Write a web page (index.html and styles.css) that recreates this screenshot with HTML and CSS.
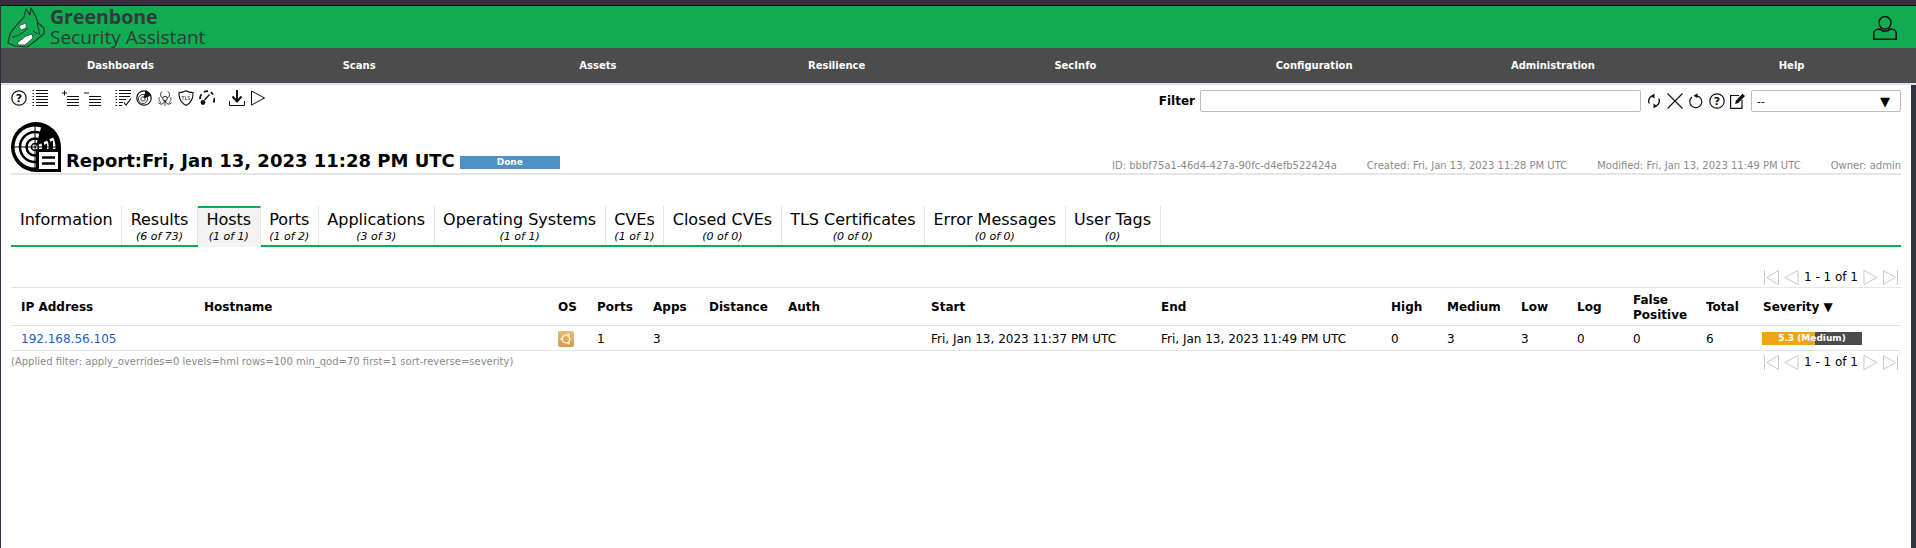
FILE: index.html
```html
<!DOCTYPE html>
<html lang="en">
<head>
    <meta charset="UTF-8">
    <meta name="viewport" content="width=device-width, initial-scale=1.0">
    <title>Greenbone Security Assistant</title>
    <link rel="stylesheet" href="styles.css">
</head>
<body>
    <header class="top">
        <div class="brand">
            <svg class="logo" width="40" height="42" viewBox="0 0 40 42">
                <path d="M1 36 L3 27 C7 20 13 15 17 10 L19 2 L23 8 L24 1 L29 10 L31 16 L37 21 L37 27 L33 30 L27 35 L20 40 L8 39 Z" fill="#12a850" stroke="#1d3b2b" stroke-width="1.2" stroke-linejoin="round"/>
                <path d="M12 19 L19 16 L19 21 L14 23 Z" fill="#fff" stroke="#1d3b2b" stroke-width=".6"/>
                <path d="M10 36 L19 29 L25 27 L26 31 L18 38 L12 38 Z" fill="#fff" stroke="#1d3b2b" stroke-width=".8"/>
                <path d="M5 30 C10 30 16 26 21 21 M30 16 L33 28 M26 24 L31 27" fill="none" stroke="#1d3b2b" stroke-width="1"/>
            </svg>
            <div class="brand-text">
                <div class="brand-name">Greenbone</div>
                <div class="brand-sub">Security Assistant</div>
            </div>
            <svg class="user" width="24" height="24" viewBox="0 0 24 24" fill="none" stroke="#111" stroke-width="1.5">
                <ellipse cx="12" cy="6.8" rx="6" ry="6.3"/>
                <path d="M.8 23.2 V17 C.8 14.5 4 13 7.2 13 C8.5 15.8 15.5 15.8 16.8 13 C20 13 23.2 14.5 23.2 17 V23.2 Z"/>
            </svg>
        </div>
        <nav class="menu">
            <a>Dashboards</a>
            <a>Scans</a>
            <a>Assets</a>
            <a>Resilience</a>
            <a>SecInfo</a>
            <a>Configuration</a>
            <a>Administration</a>
            <a>Help</a>
        </nav>
        <div class="menu-line"></div>
    </header>

    <main class="content">
        <div class="toolbar">
            <div class="tools">
                <div class="tool-group">
                    <svg class="icon" viewBox="0 0 16 16"><circle cx="8" cy="8" r="7.2" fill="none" stroke="#111" stroke-width="1.2"/><text x="8" y="12" class="icon-q">?</text></svg>
                    <svg class="icon" viewBox="0 0 16 16" stroke="#111" stroke-width="1" fill="none"><path d="M4 .5H16M4 3.5H16M4 6.5H16M4 9.5H16M4 12.5H16M4 15.5H16"/><path d="M.5 .5H2M.5 3.5H2M.5 6.5H2M.5 9.5H2M.5 12.5H2M.5 15.5H2"/></svg>
                </div>
                <div class="tool-group">
                    <svg class="icon icon-wide" viewBox="0 0 17 16" stroke="#111" stroke-width="1" fill="none"><path d="M5 6.5H17M5 9.5H17M5 12.5H17M5 15.5H17"/><path d="M0 3H5M2.5 .5V5.5"/></svg>
                    <svg class="icon icon-wide" viewBox="0 0 17 16" stroke="#111" stroke-width="1" fill="none"><path d="M5 6.5H17M5 9.5H17M5 12.5H17M5 15.5H17"/><path d="M0 3H5"/></svg>
                </div>
                <div class="tool-group">
                    <svg class="icon" viewBox="0 0 16 16" stroke="#111" stroke-width="1" fill="none"><path d="M4 .5H16M4 3.5H16M4 6.5H15M4 9.5H11M4 12.5H8M4 15.5H7"/><path d="M.5 .5H2M.5 3.5H2M.5 6.5H2M.5 9.5H2M.5 12.5H2M.5 15.5H2"/><path d="M9 12.5L11 15L16 8.5" stroke-width="1.1"/></svg>
                    <svg class="icon" viewBox="0 0 16 16" fill="none" stroke="#111"><circle cx="8" cy="8" r="7.2" stroke-width="1.2"/><circle cx="7" cy="9" r="4.6" stroke-width=".8"/><circle cx="7" cy="9" r="2.2" stroke-width=".8"/><path d="M8 8L10 .8L15 5Z" fill="#111"/></svg>
                    <svg class="icon" viewBox="0 0 16 16" fill="none" stroke="#111" stroke-width=".9"><circle cx="8" cy="8.5" r="2.2"/><path d="M5 1.5C2.5 4 3.5 7.5 6 8M11 1.5C13.5 4 12.5 7.5 10 8M1.5 12.5C3 15 7 14.5 7.5 11M14.5 12.5C13 15 9 14.5 8.5 11"/><path d="M8 11V16M2 7A6.5 6.5 0 0 0 4 13M14 7A6.5 6.5 0 0 1 12 13" stroke-width=".7"/></svg>
                    <svg class="icon" viewBox="0 0 16 16" fill="none" stroke="#111" stroke-width="1.1"><path d="M8 .8C10 2 12.5 2.6 15 2.6C15.4 9 12.5 13.2 8 15.4C3.5 13.2 .6 9 1 2.6C3.5 2.6 6 2 8 .8Z"/><text x="8" y="9.6" class="icon-tls">TLS</text></svg>
                    <svg class="icon" viewBox="0 0 16 16" fill="none" stroke="#111" stroke-width="1.8"><path d="M1 9A7 7 0 0 1 2.5 4.2M5 2A7 7 0 0 1 9 1.2M12 2.2A7 7 0 0 1 14 4.5M15.2 8A7 7 0 0 1 14.5 12.5"/><path d="M10.5 4.5L5.5 10" stroke-width="1.4"/><circle cx="4" cy="12.5" r="2.4" fill="#111" stroke="none"/></svg>
                </div>
                <div class="tool-group">
                    <svg class="icon" viewBox="0 0 16 16" fill="none" stroke="#111"><path d="M8 0V10" stroke-width="2"/><path d="M3.5 6.5L8 11.5L12.5 6.5" stroke-width="2"/><path d="M.5 11V15.5H15.5V11" stroke-width="1"/></svg>
                    <svg class="icon" viewBox="0 0 16 16" fill="none" stroke="#111" stroke-width="1"><path d="M1.5 1V15L14.5 8Z"/></svg>
                </div>
            </div>
            <div class="filter">
                <label class="filter-label" for="filter">Filter</label>
                <input class="filter-input" id="filter" type="text">
                <div class="filter-icons">
                    <svg class="icon" viewBox="0 0 16 16" fill="none" stroke="#111" stroke-width="1.4"><path d="M3.2 10.5A5.5 5.5 0 0 1 6 3M12.8 5.5A5.5 5.5 0 0 1 10 13"/><path d="M8.5 .5L5 3L8.5 5.5Z M7.5 10.5L11 13L7.5 15.5Z" fill="#111" stroke="none"/></svg>
                    <svg class="icon" viewBox="0 0 16 16" fill="none" stroke="#111" stroke-width="1.2"><path d="M.5 .5L15.5 15.5M15.5 .5L.5 15.5"/></svg>
                    <svg class="icon" viewBox="0 0 16 16" fill="none" stroke="#111" stroke-width="1.2"><path d="M9 2.8A6 6 0 1 1 4 4"/><path d="M9.5 .2V5.2L5.5 2.7Z" fill="#111" stroke="none"/></svg>
                    <svg class="icon" viewBox="0 0 16 16"><circle cx="8" cy="8" r="7.2" fill="none" stroke="#111" stroke-width="1.2"/><text x="8" y="12" class="icon-q">?</text></svg>
                    <svg class="icon" viewBox="0 0 16 16" fill="none" stroke="#111" stroke-width="1.2"><path d="M12 7V15.4H.6V2.5H9"/><path d="M5 11L6 7.5L12.5 .8L15 3L8.4 10Z" fill="#111" stroke="none"/></svg>
                </div>
                <div class="filter-select">
                    <span>--</span>
                    <span class="select-arrow">▼</span>
                </div>
            </div>
        </div>

        <div class="title-row">
            <svg class="report-icon" width="50" height="50" viewBox="0 0 50 50">
                <path d="M25 0A25 25 0 0 1 50 25V50H25A25 25 0 0 1 25 0Z" fill="#000"/>
                <circle cx="24" cy="25" r="20.5" fill="#fff"/>
                <circle cx="24" cy="25" r="15" fill="none" stroke="#000" stroke-width="2.5"/>
                <circle cx="24" cy="25" r="8.5" fill="none" stroke="#000" stroke-width="2.5"/>
                <circle cx="24" cy="25" r="3.5" fill="none" stroke="#000" stroke-width="1.5"/>
                <path d="M24 2V48M2 25H46" stroke="#000" stroke-width="1"/>
                <path d="M45 14L25 24L31 2Z" fill="#000"/>
                <path d="M33 27V23L36 21.5V27ZM39 27V20L42 18.5V27Z" fill="#000"/>
                <rect x="25" y="27" width="25" height="23" fill="#000"/>
                <rect x="28" y="30" width="19" height="17" fill="#fff"/>
                <path d="M31 35.5H44M31 41.5H44" stroke="#000" stroke-width="2.6"/>
            </svg>
            <h1 class="report-title">Report:Fri, Jan 13, 2023 11:28 PM UTC</h1>
            <div class="status-bar">Done</div>
            <div class="report-meta">
                <span>ID: bbbf75a1-46d4-427a-90fc-d4efb522424a</span>
                <span>Created: Fri, Jan 13, 2023 11:28 PM UTC</span>
                <span>Modified: Fri, Jan 13, 2023 11:49 PM UTC</span>
                <span>Owner: admin</span>
            </div>
        </div>

        <div class="tabs">
            <div class="tab">Information</div>
            <div class="tab">Results<small>(6 of 73)</small></div>
            <div class="tab active">Hosts<small>(1 of 1)</small></div>
            <div class="tab">Ports<small>(1 of 2)</small></div>
            <div class="tab">Applications<small>(3 of 3)</small></div>
            <div class="tab">Operating Systems<small>(1 of 1)</small></div>
            <div class="tab">CVEs<small>(1 of 1)</small></div>
            <div class="tab">Closed CVEs<small>(0 of 0)</small></div>
            <div class="tab">TLS Certificates<small>(0 of 0)</small></div>
            <div class="tab">Error Messages<small>(0 of 0)</small></div>
            <div class="tab">User Tags<small>(0)</small></div>
        </div>

        <div class="pager pager-top">
            <svg class="page-icon" viewBox="0 0 16 16"><path d="M.5 0V16M15.5 .5V15.5L3 8Z"/></svg>
            <svg class="page-icon" viewBox="0 0 16 16"><path d="M15 .5V15.5L1 8Z"/></svg>
            <span>1 - 1 of 1</span>
            <svg class="page-icon" viewBox="0 0 16 16"><path d="M1 .5V15.5L15 8Z"/></svg>
            <svg class="page-icon" viewBox="0 0 16 16"><path d="M15.5 0V16M.5 .5V15.5L13 8Z"/></svg>
        </div>

        <table class="hosts">
            <colgroup>
                <col class="c-ip"><col class="c-host"><col class="c-os"><col class="c-num">
                <col class="c-num"><col class="c-dist"><col class="c-auth"><col class="c-date">
                <col class="c-date"><col class="c-num"><col class="c-med"><col class="c-num">
                <col class="c-num"><col class="c-fp"><col class="c-total"><col class="c-sev">
            </colgroup>
            <thead>
                <tr>
                    <th>IP Address</th><th>Hostname</th><th>OS</th><th>Ports</th><th>Apps</th>
                    <th>Distance</th><th>Auth</th><th>Start</th><th>End</th><th>High</th>
                    <th>Medium</th><th>Low</th><th>Log</th><th>False<br>Positive</th><th>Total</th>
                    <th>Severity ▼</th>
                </tr>
            </thead>
            <tbody>
                <tr>
                    <td><a class="ip-link">192.168.56.105</a></td>
                    <td></td>
                    <td class="os-cell">
                        <svg class="os-icon" width="16" height="16" viewBox="0 0 16 16">
                            <defs>
                                <linearGradient id="osFill" x1="0" y1="0" x2="0" y2="1">
                                    <stop offset="0" stop-color="#e9bb78"/>
                                    <stop offset="1" stop-color="#d39a4e"/>
                                </linearGradient>
                            </defs>
                            <rect width="16" height="16" rx="2" fill="url(#osFill)"/>
                            <circle cx="8" cy="8" r="3.8" fill="none" stroke="#fbeeda" stroke-width="1.4"/>
                            <circle cx="3.5" cy="8" r="1.2" fill="#fbeeda"/>
                            <circle cx="10.5" cy="3.8" r="1.2" fill="#fbeeda"/>
                            <circle cx="10.5" cy="12.2" r="1.2" fill="#fbeeda"/>
                        </svg>
                    </td>
                    <td>1</td><td>3</td><td></td><td></td>
                    <td>Fri, Jan 13, 2023 11:37 PM UTC</td>
                    <td>Fri, Jan 13, 2023 11:49 PM UTC</td>
                    <td>0</td><td>3</td><td>3</td><td>0</td><td>0</td><td>6</td>
                    <td class="sev-cell">
                        <div class="sev-bar">
                            <div class="sev-fill" style="width: 53%"></div>
                            <span class="sev-text">5.3 (Medium)</span>
                        </div>
                    </td>
                </tr>
            </tbody>
        </table>

        <div class="table-foot">
            <div class="applied">(Applied filter: apply_overrides=0 levels=hml rows=100 min_qod=70 first=1 sort-reverse=severity)</div>
            <div class="pager">
                <svg class="page-icon" viewBox="0 0 16 16"><path d="M.5 0V16M15.5 .5V15.5L3 8Z"/></svg>
                <svg class="page-icon" viewBox="0 0 16 16"><path d="M15 .5V15.5L1 8Z"/></svg>
                <span>1 - 1 of 1</span>
                <svg class="page-icon" viewBox="0 0 16 16"><path d="M1 .5V15.5L15 8Z"/></svg>
                <svg class="page-icon" viewBox="0 0 16 16"><path d="M15.5 0V16M.5 .5V15.5L13 8Z"/></svg>
            </div>
        </div>
    </main>
</body>
</html>
```

FILE: styles.css
```css
* { box-sizing: border-box; }
html, body { height: 100%; }
body { margin: 0; padding: 5px 0 0 1px; background: #2f3340; font-family: "DejaVu Sans", sans-serif; font-size: 12px; color: #000; display: flex; flex-direction: column; overflow: hidden; }

.top { border-top: 1px solid #0a0a0a; }
.brand { height: 42px; background: #11ab51; display: flex; align-items: flex-start; padding-left: 6px; }
.logo { margin-top: 1px; }
.brand-text { margin-left: 3px; color: #33393c; font-family: "Open Sans", sans-serif; }
.brand-name { font-size: 19.5px; font-weight: 700; line-height: 20px; margin-top: 1px; }
.brand-sub { font-size: 19px; line-height: 20px; font-weight: 400; }
.user { margin-left: auto; margin-right: 19px; margin-top: 10px; }

.menu { height: 35px; background: #4c4c4c; display: grid; grid-template-columns: repeat(8, 238.75px); align-items: center; }
.menu a { color: #fff; font-weight: bold; font-size: 10px; text-align: center; }
.menu-line { height: 2px; background: #d6e6fa; }

.content { flex: 1; width: 1910px; background: #fff; padding: 5px 10px 0; }

.toolbar { display: flex; justify-content: space-between; height: 22px; }
.tools { display: flex; gap: 14px; }
.tool-group { display: flex; gap: 5px; }
.icon { width: 16px; height: 16px; display: block; flex: none; }
.icon-wide { width: 17px; }
.icon-q { font-size: 11px; font-weight: bold; text-anchor: middle; fill: #111; stroke: none; }
.icon-tls { font-size: 5px; text-anchor: middle; fill: #111; stroke: none; }

.filter { display: flex; align-items: flex-start; }
.filter-label { font-weight: bold; font-size: 12px; line-height: 22px; margin-right: 5px; }
.filter-input { width: 441px; height: 22px; border: 1px solid #bbb; border-radius: 2px; padding: 0 5px; }
.filter-icons { display: flex; gap: 5px; margin: 3px 5px 0 5px; }
.filter-select { width: 150px; height: 22px; border: 1px solid #bbb; border-radius: 2px; display: flex; justify-content: space-between; align-items: center; padding: 0 10px 0 5px; font-size: 11px; }
.select-arrow { font-size: 13px; }

.title-row { display: flex; align-items: flex-end; margin-top: 10px; padding-bottom: 1px; height: 53px; border-bottom: 2px solid #e5e5e5; }
.report-icon { flex: none; margin-right: 5px; }
.report-title { margin: 0 5px 0 0; font-size: 18px; font-weight: bold; line-height: 22px; white-space: nowrap; }
.status-bar { width: 100px; height: 13px; margin-bottom: 3px; background: #4f91c7; color: #fff; font-size: 9px; font-weight: bold; line-height: 13px; text-align: center; }
.report-meta { margin-left: auto; display: flex; gap: 30px; color: #8a8a8a; font-size: 10px; line-height: 14px; margin-bottom: -1px; }

.tabs { display: flex; height: 41px; margin-top: 31px; border-bottom: 2px solid #11ab51; }
.tab { padding: 4px 8.5px 0; border-right: 1px solid #e5e5e5; font-size: 16px; line-height: 20px; text-align: center; white-space: nowrap; }
.tab:first-child { padding-left: 9px; }
.tab small { display: block; font-size: 11px; font-style: italic; line-height: 12px; margin-top: 1px; }
.tab.active { background: #f3f3f3; border-top: 2px solid #11ab51; height: 41px; padding-top: 2px; }

.pager { display: flex; align-items: center; justify-content: flex-end; gap: 5px; height: 16px; padding-right: 3px; font-size: 12px; }
.pager-top { margin-top: 22px; margin-bottom: 2px; }
.page-icon { width: 15px; height: 15px; flex: none; fill: none; stroke: #c4c4c4; stroke-width: 1; }

.hosts { width: 1890px; table-layout: fixed; border-collapse: collapse; border-top: 1px solid #e5e5e5; }
.c-ip { width: 183px; }
.c-host { width: 354px; }
.c-os { width: 39px; }
.c-num { width: 56px; }
.c-dist { width: 79px; }
.c-auth { width: 143px; }
.c-date { width: 230px; }
.c-med { width: 74px; }
.c-fp { width: 73px; }
.c-total { width: 57px; }
.c-sev { width: 148px; }
.hosts th { height: 38px; padding: 2px 0 0 10px; text-align: left; font-weight: bold; line-height: 15px; border-bottom: 1px solid #e5e5e5; }
.hosts td { height: 25px; padding: 1px 0 0 10px; border-bottom: 1px solid #e5e5e5; white-space: nowrap; }
.ip-link { color: #1a5fc4; }
.os-icon { display: block; }
.sev-bar { width: 100px; height: 13px; background: #4c4c4c; position: relative; margin-left: -1px; }
.sev-fill { height: 100%; background: #f0a519; }
.sev-text { position: absolute; left: 0; right: 0; top: 0; color: #fff; font-size: 9px; font-weight: bold; line-height: 13px; text-align: center; }

.table-foot { display: flex; justify-content: space-between; align-items: flex-start; padding-top: 3px; }
.applied { color: #8a8a8a; font-size: 10px; line-height: 14px; margin-top: 1px; }
```
